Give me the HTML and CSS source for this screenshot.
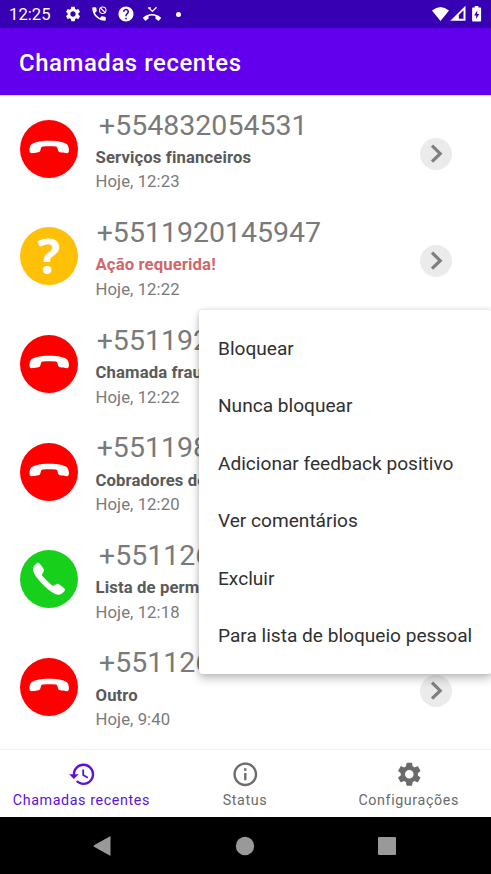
FILE: index.html
```html
<!DOCTYPE html>
<html lang="pt-BR">
<head>
    <meta charset="UTF-8">
    <meta name="viewport" content="width=device-width, initial-scale=1.0">
    <title>Chamadas recentes</title>

    <link rel="stylesheet" href="styles.css">
</head>
<body>
    <!-- iconos reutilizados en la lista -->
    <svg class="defs">
        <symbol id="handset" viewBox="0 0 58 58">
            <path d="M9.500 29.500C9.700 25 12 23.300 16 22.200 20 21 25 20.800 29.200 20.800S38.500 21 42.500 22.200C46.500 23.300 48.700 25 48.900 29.500c.1 2.700-.4 3.700-2 3.700-2 0-4.600-.4-6.800-.9-1.600-.4-2-1.400-2.300-2.900-.4-1.900-.9-2.800-2.300-2.900-4.200-.3-8.400-.3-12.600 0-1.400.1-1.900 1-2.300 2.900-.3 1.500-.7 2.500-2.300 2.900-2.200.5-4.800.9-6.800.9-1.600 0-2.100-1-2-3.700z"/>
        </symbol>
        <symbol id="chevron" viewBox="0 0 32 32">
            <path d="M12 7.700l8.200 8-8.200 8" fill="none" stroke="#7f7f7f" stroke-width="3.200"/>
        </symbol>
        <symbol id="gear" viewBox="0 0 24 24">
            <path d="M19.140 12.940c.040-.3.060-.610.060-.940 0-.320-.020-.640-.070-.940l2.030-1.580c.180-.140.230-.410.120-.610l-1.920-3.320c-.120-.220-.370-.290-.590-.220l-2.390.960c-.500-.380-1.030-.700-1.620-.940l-.360-2.540c-.040-.240-.240-.410-.480-.410h-3.840c-.240 0-.430.170-.470.410l-.360 2.540c-.590.240-1.130.570-1.620.940l-2.390-.960c-.220-.080-.470 0-.590.220L2.740 8.870c-.120.210-.080.470.120.610l2.030 1.580c-.050.300-.090.630-.090.940s.020.640.070.940l-2.030 1.580c-.180.140-.230.410-.120.610l1.920 3.320c.120.220.370.290.590.220l2.390-.960c.500.380 1.030.700 1.620.940l.360 2.540c.050.240.240.410.480.410h3.840c.240 0 .440-.170.470-.410l.360-2.540c.590-.240 1.130-.560 1.620-.940l2.390.960c.220.080.470 0 .590-.220l1.920-3.320c.120-.220.070-.470-.120-.610l-2.010-1.580zM12 15.600c-1.980 0-3.600-1.620-3.600-3.600s1.620-3.600 3.600-3.600 3.600 1.620 3.600 3.600-1.620 3.600-3.600 3.600z"/>
        </symbol>
    </svg>

    <div class="phone">
        <div class="statusBar">
            <span class="clock">12:25</span>
            <svg class="stIcon" viewBox="0 0 24 24"><use href="#gear"/></svg>
            <svg class="stIcon" viewBox="0 0 24 24">
                <path d="M20 15.500c-1.200 0-2.500-.2-3.600-.6-.3-.1-.7 0-1 .2l-2.200 2.200c-2.800-1.400-5.100-3.800-6.600-6.600l2.200-2.200c.3-.3.400-.7.200-1C8.700 6.500 8.500 5.200 8.500 4c0-.5-.5-1-1-1H4c-.5 0-1 .5-1 1 0 9.400 7.600 17 17 17 .5 0 1-.5 1-1v-3.500c0-.5-.5-1-1-1z"/>
                <circle cx="17" cy="7" r="4.300" fill="none" stroke="#fff" stroke-width="1.500"/>
                <path d="M14 4l6 6" stroke="#fff" stroke-width="1.500"/>
            </svg>
            <svg class="stIcon" viewBox="0 0 24 24">
                <path d="M12 2C6.480 2 2 6.480 2 12s4.480 10 10 10 10-4.480 10-10S17.520 2 12 2zm1 17h-2v-2h2v2zm2.070-7.750l-.9.920C13.450 12.900 13 13.500 13 15h-2v-.5c0-1.100.450-2.100 1.170-2.830l1.240-1.260c.370-.360.590-.860.590-1.410 0-1.100-.9-2-2-2s-2 .9-2 2H8c0-2.210 1.790-4 4-4s4 1.790 4 4c0 .880-.360 1.680-.930 2.250z"/>
            </svg>
            <svg class="stIcon" viewBox="0 0 24 24">
                <path d="M8 4l4.500 4.500L18 3" fill="none" stroke="#fff" stroke-width="1.800"/>
                <path d="M6.500 3h4v1.800h-4z"/>
                <path d="M23.710 16.670C20.660 13.780 16.540 12 12 12 7.460 12 3.340 13.780.29 16.670c-.180.180-.290.430-.290.710s.110.530.290.710l2.480 2.480c.180.180.430.290.710.290.270 0 .520-.110.700-.280.790-.740 1.690-1.360 2.660-1.850.330-.160.560-.5.560-.9v-3.100C8.850 14.250 10.400 14 12 14s3.150.25 4.600.72v3.100c0 .39.23.74.56.9.98.49 1.870 1.120 2.670 1.850.18.18.43.28.7.28.28 0 .53-.11.71-.29l2.480-2.480c.18-.18.29-.43.29-.71s-.12-.52-.3-.7z"/>
            </svg>
            <span class="dot"></span>
            <svg class="signals" viewBox="0 0 54 18">
                <path d="M1 5.500Q9.500-1.500 18 5.500L9.500 16z"/>
                <path d="M19.300 15.800L34.500.8v15z"/>
                <path d="M27.800 10l4.700-4.800v8.600h-4.700z" fill="#3700b3"/>
                <path d="M41.800 2.500h2V1h3.600v1.500h2q.7 0 .7.7v12.600q0 .7-.7.7h-7.600q-.7 0-.7-.7V3.200q0-.7.700-.7z"/>
                <path d="M46.200 5.500l-3 5h2V14l3-5h-2z" fill="#3700b3"/>
            </svg>
        </div>

        <header class="appBar">
            <h1>Chamadas recentes</h1>
        </header>

        <main class="callList">
            <div class="call">
                <div class="badge blocked"><svg><use href="#handset"/></svg></div>
                <div class="info">
                    <div class="number wide">+554832054531</div>
                    <div class="label">Serviços financeiros</div>
                    <div class="time">Hoje, 12:23</div>
                </div>
                <button class="more"><svg><use href="#chevron"/></svg></button>
            </div>
            <div class="call">
                <div class="badge unknown">?</div>
                <div class="info">
                    <div class="number">+5511920145947</div>
                    <div class="label alert">Ação requerida!</div>
                    <div class="time">Hoje, 12:22</div>
                </div>
                <button class="more"><svg><use href="#chevron"/></svg></button>
            </div>
            <div class="call">
                <div class="badge blocked"><svg><use href="#handset"/></svg></div>
                <div class="info">
                    <div class="number">+551192</div>
                    <div class="label">Chamada fraud</div>
                    <div class="time">Hoje, 12:22</div>
                </div>
            </div>
            <div class="call">
                <div class="badge blocked"><svg><use href="#handset"/></svg></div>
                <div class="info">
                    <div class="number">+551198</div>
                    <div class="label">Cobradores de</div>
                    <div class="time">Hoje, 12:20</div>
                </div>
            </div>
            <div class="call">
                <div class="badge allowed"><svg><use href="#handset"/></svg></div>
                <div class="info">
                    <div class="number wide">+551126</div>
                    <div class="label">Lista de permi</div>
                    <div class="time">Hoje, 12:18</div>
                </div>
            </div>
            <div class="call">
                <div class="badge blocked"><svg><use href="#handset"/></svg></div>
                <div class="info">
                    <div class="number wide">+551126</div>
                    <div class="label">Outro</div>
                    <div class="time">Hoje, 9:40</div>
                </div>
                <button class="more"><svg><use href="#chevron"/></svg></button>
            </div>

            <ul class="menu">
                <li>Bloquear</li>
                <li>Nunca bloquear</li>
                <li>Adicionar feedback positivo</li>
                <li>Ver comentários</li>
                <li>Excluir</li>
                <li>Para lista de bloqueio pessoal</li>
            </ul>
        </main>

        <nav class="tabs">
            <a class="tab active">
                <svg viewBox="0 0 24 24"><path d="M13 3c-4.970 0-9 4.030-9 9H1l3.890 3.890.070.140L9 12H6c0-3.870 3.130-7 7-7s7 3.130 7 7-3.130 7-7 7c-1.930 0-3.680-.790-4.940-2.060l-1.420 1.420C8.270 19.990 10.510 21 13 21c4.970 0 9-4.030 9-9s-4.030-9-9-9zm-1 5v5l4.280 2.540.720-1.210-3.500-2.080V8H12z"/></svg>
                <span>Chamadas recentes</span>
            </a>
            <a class="tab">
                <svg viewBox="0 0 24 24"><path d="M11 7h2v2h-2zm0 4h2v6h-2zm1-9C6.480 2 2 6.480 2 12s4.480 10 10 10 10-4.480 10-10S17.520 2 12 2zm0 18c-4.410 0-8-3.590-8-8s3.590-8 8-8 8 3.590 8 8-3.590 8-8 8z"/></svg>
                <span>Status</span>
            </a>
            <a class="tab">
                <svg viewBox="0 0 24 24"><use href="#gear"/></svg>
                <span>Configurações</span>
            </a>
        </nav>

        <div class="systemNav">
            <svg viewBox="0 0 20 20"><path d="M17.500.8v18.400q0 .8-.8.400L1 10.700q-.8-.7 0-1.400L16.700.400q.8-.4.8.4z"/></svg>
            <svg viewBox="0 0 20 20"><circle cx="10" cy="10" r="9.200"/></svg>
            <svg viewBox="0 0 20 20"><rect x="1" y="1" width="18" height="18" rx="1"/></svg>
        </div>
    </div>
</body>
</html>
```
FILE: styles.css
```css
* {
    box-sizing: border-box;
}

body {
    margin: 0;
    font-family: Roboto, "Liberation Sans", sans-serif;
    background-color: #fff;
}

.defs {
    display: none;
}

.phone {
    display: flex;
    flex-direction: column;
    width: 491px;
    height: 874px;
    overflow: hidden;
}

.statusBar {
    display: flex;
    align-items: center;
    height: 28px;
    padding: 0 6px 0 9px;
    background-color: #3700b3;
    color: #fff;
}

.clock {
    width: 55px;
    padding-top: 1px;
    font-size: 16.7px;
}

.stIcon {
    width: 18px;
    height: 18px;
    margin-right: 8.4px;
    fill: #fff;
}

.dot {
    width: 5px;
    height: 5px;
    margin-left: 6.5px;
    border-radius: 50%;
    background-color: #fff;
}

.signals {
    width: 54px;
    height: 18px;
    margin-left: auto;
    fill: #fff;
}

.appBar {
    display: flex;
    align-items: center;
    height: 67px;
    padding: 2px 19px 0;
    background-color: #6200ee;
    box-shadow: 0 1px 1px rgba(98, 0, 238, 0.2);
    color: #fff;
}

h1 {
    margin: 0;
    font-size: 23.9px;
    font-weight: 500;
    letter-spacing: 0.58px;
}

.callList {
    position: relative;
    flex: 1;
}

.call {
    display: flex;
    height: 107.6px;
    padding: 0 39px 0 20px;
}

.badge {
    align-self: center;
    width: 58px;
    height: 58px;
    border-radius: 50%;
}

.badge svg {
    display: block;
    width: 58px;
    height: 58px;
    fill: #fff;
}

.blocked {
    background-color: #f00;
}

.allowed {
    background-color: #17d01c;
}

.allowed svg {
    transform: rotate(-135deg);
}

.unknown {
    background-color: #ffc107;
    color: #fff;
    font: bold 48px/58px "Open Sans", sans-serif;
    text-align: center;
}

.info {
    flex: 1;
    margin-left: 17.5px;
    padding-top: 13.5px;
    color: #7a7a7a;
    white-space: nowrap;
}

.number {
    margin-bottom: 3.4px;
    padding-left: 1.2px;
    font-size: 28.5px;
    line-height: 34px;
}

.wide {
    padding-left: 3.6px;
}

.label, .time {
    font-size: 16.7px;
    line-height: 24.6px;
}

.label {
    color: #5a5a5a;
    font-weight: bold;
    letter-spacing: 0.12px;
}

.alert {
    color: #d0676c;
}

.time {
    letter-spacing: 0.08px;
}

.more {
    width: 32px;
    height: 32px;
    margin-top: 42.5px;
    padding: 0;
    border: none;
    border-radius: 50%;
    background-color: #ebebeb;
}

.more svg {
    display: block;
    width: 32px;
    height: 32px;
}

/* menu contextual sobre la lista */
.menu {
    position: absolute;
    top: 214.5px;
    left: 198.5px;
    width: 293px;
    height: 364px;
    margin: 0;
    padding: 10.5px 0 0;
    border-radius: 4px;
    background-color: #fff;
    box-shadow: 0 5px 10px rgba(0, 0, 0, 0.22), 0 0 5px rgba(0, 0, 0, 0.14);
    list-style: none;
}

.menu li {
    height: 57.4px;
    padding-left: 19.5px;
    color: #303030;
    font-size: 19.1px;
    line-height: 57.4px;
    white-space: nowrap;
}

.tabs {
    display: grid;
    grid-template-columns: repeat(3, 1fr);
    height: 68px;
    border-top: 1px solid #f2f2f2;
    background-color: #fff;
}

.tab {
    display: flex;
    flex-direction: column;
    align-items: center;
    padding-top: 9.5px;
    color: #6b6b6b;
    font-size: 14.3px;
    line-height: 18px;
    letter-spacing: 0.6px;
}

.tab svg {
    width: 28.6px;
    height: 28.6px;
    margin-bottom: 3px;
    fill: currentColor;
}

.tab span {
    margin-left: -1px;
}

.active {
    color: #5b12dc;
}

.systemNav {
    display: flex;
    justify-content: center;
    align-items: center;
    gap: 122px;
    height: 57px;
    padding-right: 1px;
    background-color: #000;
}

.systemNav svg {
    width: 20px;
    height: 20px;
    fill: #999;
}
```
